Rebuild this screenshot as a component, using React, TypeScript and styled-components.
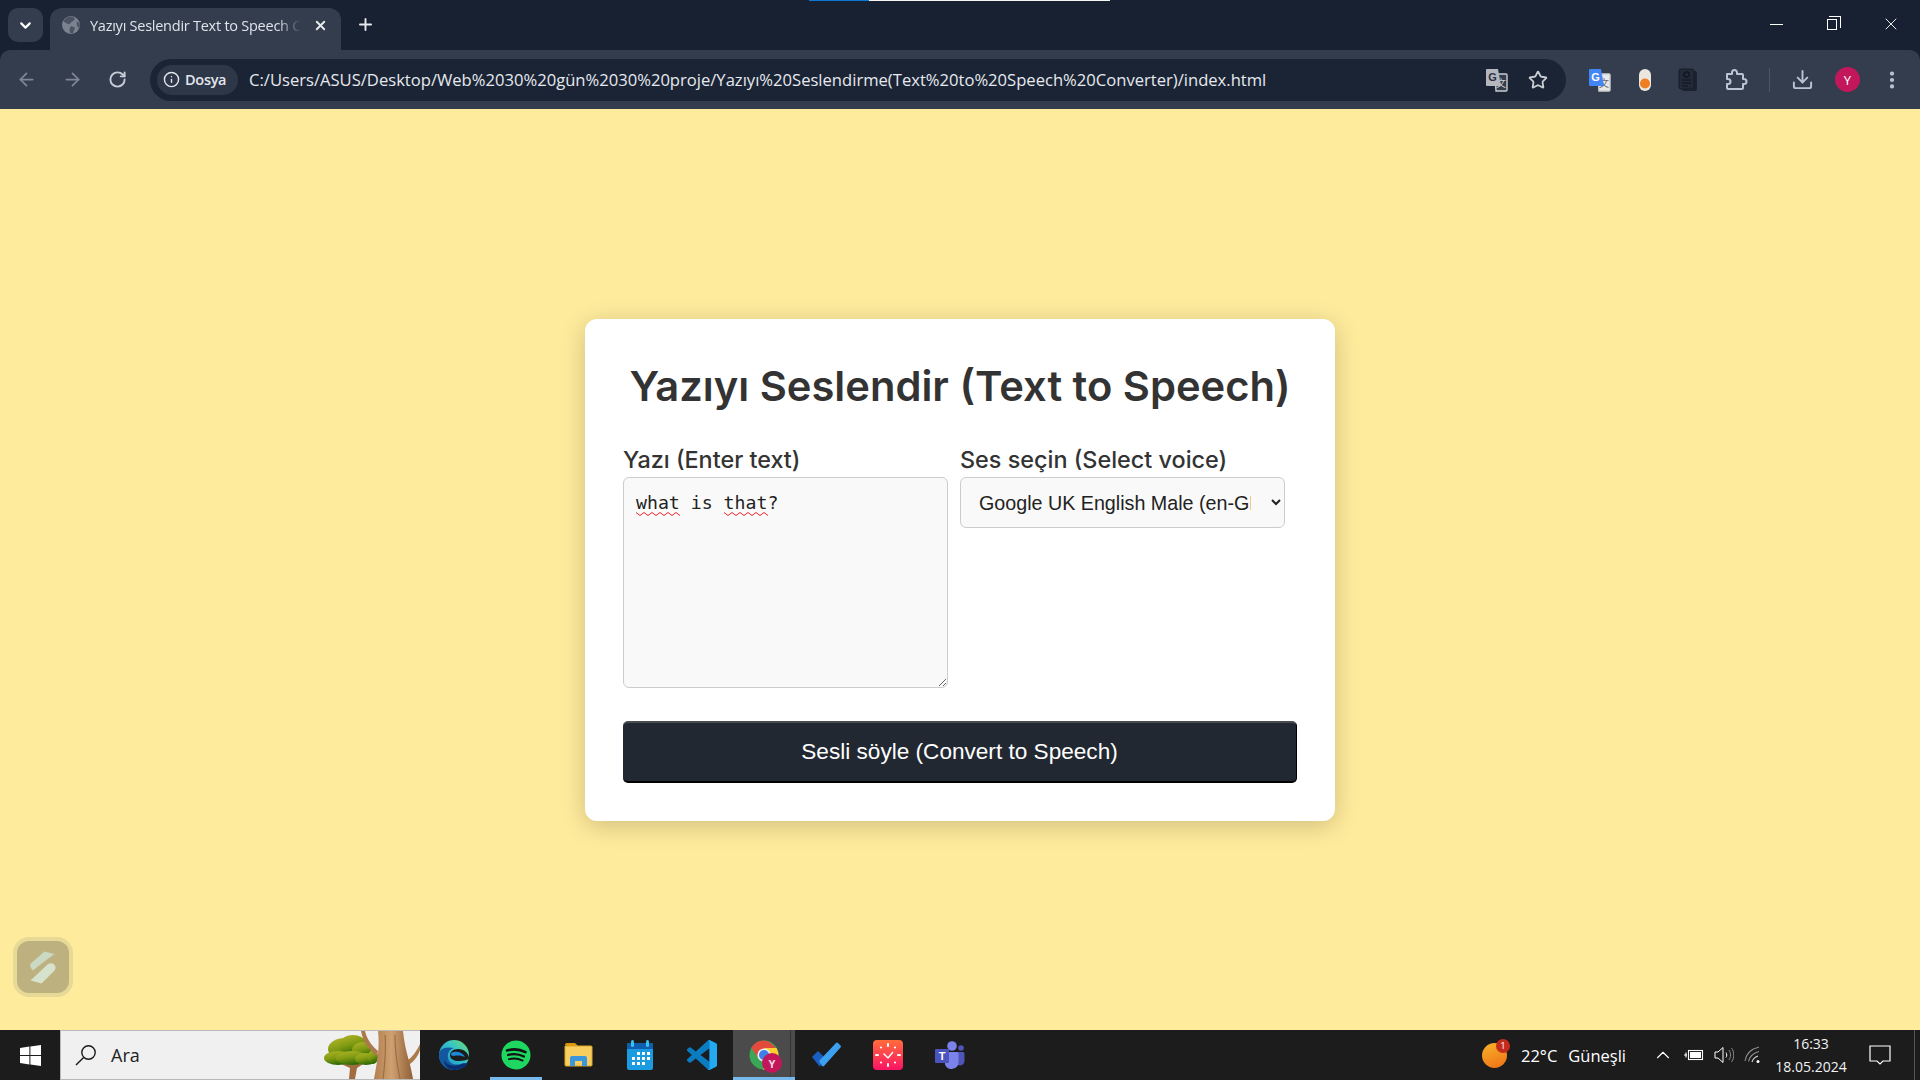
import styled, { createGlobalStyle } from 'styled-components';
import { ArrowLeft, ArrowRight, ChevronDown, ChevronUp, Download, EllipsisVertical, Info, Plus, RotateCw, Star, X } from 'lucide-react';

const GlobalStyle = createGlobalStyle`
    html, body {
        margin: 0;
        height: 100%;
        overflow: hidden;
    }
    * {
        box-sizing: border-box;
    }
`;

const UI_FONT = `'Open Sans', 'Noto Sans', sans-serif`;
const HEADING_FONT = `Inter, 'Noto Sans', sans-serif`;

const GlobeFavicon = () => (
    <svg width="18" height="18" viewBox="0 0 18 18" style={{ flex: 'none' }}>
        <circle cx="9" cy="9" r="9" fill="#7b8290" />
        <path d="M10 0.5c2 1 3 2 2.5 3.5L9.5 6 7 8.5 3 6.5 1.5 5C3.5 2 7 0 10 .5zM9 10l4 1.5L11 17c-1 .5-2 .3-3 0l-.5-4zM14.5 5.5l3 1.5c.5 2 .2 4-.5 5.5l-2-3z" fill="#4c5462" />
    </svg>
);

const TranslateIcon = ({ colored }: { colored?: boolean }) => (
    <svg width="24" height="24" viewBox="0 0 24 24">
        <path d="M10 6h11a1 1 0 0 1 1 1v15a1 1 0 0 1-1 1H11z" fill={colored ? '#e8e8e8' : '#343d4d'} stroke={colored ? '#cfcfcf' : '#c9ccd2'} strokeWidth="1.4" />
        <text x="16" y="19" fontSize="10" textAnchor="middle" fill={colored ? '#666' : '#c9ccd2'} fontFamily="'Noto Sans CJK SC', sans-serif">文</text>
        <path d="M2 1h11l3 17H2a1 1 0 0 1-1-1V2a1 1 0 0 1 1-1z" fill={colored ? '#4285f4' : '#b4b7bc'} />
        <text x="7.5" y="13" fontSize="11" fontWeight="700" textAnchor="middle" fill={colored ? '#fff' : '#2a3140'} fontFamily="'Liberation Sans', sans-serif">G</text>
    </svg>
);

const PillIcon = () => (
    <svg width="14" height="24" viewBox="0 0 14 24">
        <rect x="1" y="1" width="12" height="22" rx="6" fill="#ebe7df" />
        <circle cx="7" cy="15.5" r="5" fill="#ef7d22" />
    </svg>
);

const DarkDocIcon = () => (
    <svg width="20" height="24" viewBox="0 0 20 24">
        <rect x="4" y="3" width="15" height="20" rx="2" fill="#1b2230" />
        <rect x="1" y="1" width="15" height="20" rx="2" fill="#222a38" stroke="#171d29" />
        <circle cx="8.5" cy="6.5" r="2.6" fill="none" stroke="#0e131c" strokeWidth="1.2" />
        <path d="M4 12h9M4 15h9M4 18h6" stroke="#0e131c" strokeWidth="1.2" />
    </svg>
);

// chrome's extensions glyph, lucide's puzzle has a different outline
const ExtensionsIcon = () => (
    <svg width="24" height="24" viewBox="0 0 24 24" fill="none" stroke="#bcc4d4" strokeWidth="2" strokeLinejoin="round">
        <path d="M3 6h5V4.5a2.5 2.5 0 0 1 5 0V6h5a1 1 0 0 1 1 1v4h1a2.5 2.5 0 0 1 0 5h-1v4a1 1 0 0 1-1 1H4a1 1 0 0 1-1-1v-4h1a2.5 2.5 0 0 0 0-5H3z" />
    </svg>
);

const WindowsLogo = () => (
    <svg width="21" height="21" viewBox="0 0 21 21">
        <path d="M0 3 9.4 1.6V10H0zM10.4 1.4 21 0v10H10.4zM0 11h9.4v8.4L0 18zM10.4 11H21v10l-10.6-1.5z" fill="#fff" />
    </svg>
);

const SearchGlass = () => (
    <svg width="22" height="22" viewBox="0 0 22 22" fill="none" stroke="#1a1a1a" strokeWidth="1.4">
        <circle cx="13.5" cy="8.5" r="6.7" />
        <path d="M8.6 13.4 1 21" />
    </svg>
);

// drawn in screen coordinates, taken straight from the screenshot
const TreeArt = () => (
    <svg width="98" height="48" viewBox="322 1032 98 48">
        <defs>
            <linearGradient id="canopy" x1="0" y1="0" x2="0.4" y2="1">
                <stop offset="0" stopColor="#b5b628" />
                <stop offset="0.55" stopColor="#7f9a12" />
                <stop offset="1" stopColor="#2f6a04" />
            </linearGradient>
            <linearGradient id="trunk" x1="0" y1="0" x2="1" y2="0">
                <stop offset="0" stopColor="#b27f50" />
                <stop offset="0.45" stopColor="#cfa071" />
                <stop offset="1" stopColor="#8f5f36" />
            </linearGradient>
        </defs>
        <path d="M349 1080l1-11-13-6 1-2 14 5 4-3-5-3 2-1 6 3 8-4 10-3 1 2-12 6-9 6-2 11z" fill="#a06c40" />
        <g fill="url(#canopy)">
            <ellipse cx="345" cy="1050" rx="17" ry="11" />
            <ellipse cx="353" cy="1046" rx="14" ry="10" />
            <ellipse cx="363" cy="1051" rx="11" ry="8" />
            <ellipse cx="338" cy="1059" rx="14" ry="7" />
            <ellipse cx="352" cy="1059" rx="16" ry="7" />
            <ellipse cx="366" cy="1060" rx="11" ry="6" />
            <ellipse cx="373" cy="1058" rx="5" ry="7" />
        </g>
        <path d="M365 1032c2 8 6 14 13 20l-1 5c-8-6-14-14-16-25zM420 1045c-3 7-8 13-13 17l-1 6c8-5 14-12 15-22z" fill="#ab7a4c" />
        <path d="M378 1032h25c1 10 3 20 6 30 2 7 3 13 4 18h-39c3-16 6-32 4-48z" fill="url(#trunk)" />
        <path d="M385 1036c1 12 0 28-2 44M395 1036c0 14 2 30 5 44" fill="none" stroke="#9c6e43" strokeWidth="1.2" />
    </svg>
);

const EdgeIcon = () => (
    <svg width="32" height="32" viewBox="0 0 32 32">
        <defs>
            <linearGradient id="edgeTop" x1="0" y1="1" x2="1" y2="0">
                <stop offset="0" stopColor="#0f7fd0" />
                <stop offset="0.6" stopColor="#36c3c8" />
                <stop offset="1" stopColor="#6fdc6a" />
            </linearGradient>
        </defs>
        <circle cx="16" cy="16" r="15" fill="url(#edgeTop)" />
        <path d="M1 16c0 9 7 15 15 15 5 0 10-2 13-6l-4-1c-5 3-14 2-15-5-1-5 2-9 6-10-9-2-15 1-15 7z" fill="#13579f" />
        <path d="M31 20c0-6-5-10-11-10-5 0-8 3-8 6 0 4 4 6 9 6 4 0 7-1 10-2z" fill="#1c1c1d" />
        <path d="M17 31c-6 0-11-4-11-10 2 4 8 8 18 4 2-1 5-1 6-1-3 4-8 7-13 7z" fill="#0b2f6e" />
        <path d="M16 13c4-1 9 1 11 5-2-1-7-2-11-1-2 0-3-1-3-2 0-1 1-2 3-2z" fill="#1c8ad8" />
    </svg>
);

const SpotifyIcon = () => (
    <svg width="30" height="30" viewBox="0 0 30 30">
        <circle cx="15" cy="15" r="14.5" fill="#1ed760" />
        <g fill="none" stroke="#121212" strokeLinecap="round">
            <path d="M6 10.5c6-1.8 13-1.2 18.5 1.6" strokeWidth="2.6" />
            <path d="M7 15c5-1.5 11-1 16 1.6" strokeWidth="2.2" />
            <path d="M8 19.2c4.6-1.1 9.4-.7 13.6 1.4" strokeWidth="1.9" />
        </g>
    </svg>
);

const FolderIcon = () => (
    <svg width="29" height="26" viewBox="0 0 29 26">
        <path d="M1 3a2 2 0 0 1 2-2h8l3 3H3z" fill="#d99a05" />
        <path d="M1 4h26a1 1 0 0 1 1 1v18a1 1 0 0 1-1 1H2a1 1 0 0 1-1-1z" fill="#f8cf5e" stroke="#dba52b" />
        <path d="M6 24v-8a2 2 0 0 1 2-2h13a2 2 0 0 1 2 2v8h-5v-5h-7v5z" fill="#3b96dc" />
    </svg>
);

const CalendarIcon = () => (
    <svg width="26" height="30" viewBox="0 0 26 30">
        <rect x="0" y="3" width="26" height="27" rx="2" fill="#1b9be0" />
        <path d="M0 5a2 2 0 0 1 2-2h22a2 2 0 0 1 2 2v4H0z" fill="#0f5fb0" />
        <rect x="4" y="0" width="3" height="7" rx="1.5" fill="#3cc0ef" />
        <rect x="19" y="0" width="3" height="7" rx="1.5" fill="#3cc0ef" />
        <g fill="#fff">
            <rect x="10" y="12" width="3" height="3" /><rect x="15" y="12" width="3" height="3" /><rect x="20" y="12" width="3" height="3" />
            <rect x="5" y="17" width="3" height="3" /><rect x="10" y="17" width="3" height="3" /><rect x="15" y="17" width="3" height="3" /><rect x="20" y="17" width="3" height="3" />
            <rect x="5" y="22" width="3" height="3" /><rect x="10" y="22" width="3" height="3" /><rect x="15" y="22" width="3" height="3" />
        </g>
    </svg>
);

const VsCodeIcon = () => (
    <svg width="30" height="30" viewBox="0 0 32 32">
        <path d="M30.9 3.5 24.3.3a2 2 0 0 0-2.3.4L9.4 12.2 3.9 8a1.3 1.3 0 0 0-1.7.1L.4 9.7a1.3 1.3 0 0 0 0 2L5.2 16 .4 20.3a1.3 1.3 0 0 0 0 2l1.8 1.6a1.3 1.3 0 0 0 1.7.1l5.5-4.2L22 31.3a2 2 0 0 0 2.3.4l6.6-3.2a2 2 0 0 0 1.1-1.8V5.3a2 2 0 0 0-1.1-1.8zM24 23.3 14.4 16 24 8.7z" fill="#0a7cc2" />
        <path d="M22 31.3a2 2 0 0 0 2.3.4l6.6-3.2a2 2 0 0 0 1.1-1.8V5.3a2 2 0 0 0-1.1-1.8L24.3.3a2 2 0 0 0-2.3.4c1-.6 2 .2 2 1.3v27.9c0 1.2-1 1.9-2 1.4z" fill="#23a8f2" />
    </svg>
);

const ChromeIcon = () => (
    <svg width="30" height="30" viewBox="0 0 30 30">
        <circle cx="15" cy="15" r="14.5" fill="#3aa757" />
        <path d="M15 .5A14.5 14.5 0 0 0 2.4 7.8L9 18l2-7h16.5A14.5 14.5 0 0 0 15 .5z" fill="#e24b3c" />
        <path d="M27.5 8H15l5 8-6 13.5A14.5 14.5 0 0 0 27.5 8z" fill="#fdd02f" />
        <circle cx="15" cy="15" r="6.6" fill="#e8eef8" />
        <circle cx="15" cy="15" r="5" fill="#3f7fe8" />
    </svg>
);

const ChromeAppIcon = () => (
    <ChromeWrap>
        <ChromeIcon />
        <ChromeBadge>Y</ChromeBadge>
    </ChromeWrap>
);

const TodoIcon = () => (
    <svg width="30" height="26" viewBox="0 0 30 26">
        <path d="M1 15 7 9l6 6-4 10z" fill="#1a5ec1" />
        <path d="M8 19 25 1a1.5 1.5 0 0 1 2 0l2.5 2.5a1.5 1.5 0 0 1 0 2L13 24a1.5 1.5 0 0 1-2 0z" fill="#3d9ff0" />
    </svg>
);

const ClockAppIcon = () => (
    <svg width="30" height="30" viewBox="0 0 30 30">
        <defs>
            <linearGradient id="clockBg" x1="0" y1="0" x2="0" y2="1">
                <stop offset="0" stopColor="#ff6d3b" />
                <stop offset="1" stopColor="#fb1363" />
            </linearGradient>
        </defs>
        <rect width="30" height="30" rx="4" fill="url(#clockBg)" />
        <g fill="#fff">
            <rect x="14" y="3" width="2" height="4" rx="1" /><rect x="14" y="23" width="2" height="4" rx="1" />
            <rect x="2" y="14" width="4" height="2" rx="1" /><rect x="24" y="14" width="4" height="2" rx="1" />
            <circle cx="8" cy="7.5" r="1.1" /><circle cx="22" cy="7.5" r="1.1" /><circle cx="8" cy="22.5" r="1.1" /><circle cx="22" cy="22.5" r="1.1" />
        </g>
        <path d="M10.5 13.5 15 18l5-6" fill="none" stroke="#fff" strokeWidth="1.5" />
    </svg>
);

const TeamsIcon = () => (
    <svg width="30" height="30" viewBox="0 0 30 30">
        <circle cx="17" cy="6" r="4.8" fill="#7b83eb" />
        <circle cx="26" cy="8" r="2.8" fill="#4f56b8" />
        <path d="M21 12h7a1.5 1.5 0 0 1 1.5 1.5V21a4.5 4.5 0 0 1-8.5 2z" fill="#4f56b8" />
        <path d="M10 12h12a1.5 1.5 0 0 1 1.5 1.5V22a7 7 0 0 1-13.5 2.5z" fill="#7b83eb" />
        <rect x="0" y="9" width="14" height="14" rx="1" fill="#4b53bc" />
        <text x="7" y="20" fontSize="11" fontWeight="700" textAnchor="middle" fill="#fff" fontFamily="'Liberation Sans', sans-serif">T</text>
    </svg>
);

const WifiIcon = () => (
    <svg width="18" height="18" viewBox="0 0 18 18" fill="none" stroke="#8d8d8d" strokeWidth="1.1">
        <path d="M1 15C2 8 7 3 15 1" />
        <path d="M4.5 15.5C5.5 11 9 7 15 5.5" />
        <path d="M8 16c.8-3 3-5 6-6" stroke="#d0d0d0" />
        <circle cx="14" cy="15.5" r="1.5" fill="#fff" stroke="none" />
    </svg>
);

const BatteryIcon = () => (
    <svg width="20" height="14" viewBox="0 0 20 14" fill="none" stroke="#fff" strokeWidth="1.1">
        <rect x="4.5" y="2.5" width="14" height="9" />
        <rect x="6" y="4" width="11" height="6" fill="#fff" stroke="none" />
        <path d="M0 7h3M2 4.5v5" />
    </svg>
);

const SpeakerIcon = () => (
    <svg width="20" height="18" viewBox="0 0 20 18" fill="none" stroke="#fff" strokeWidth="1">
        <path d="M1 6h3l5-4.5v15L4 12H1z" />
        <path d="M12 6.5c1 1.4 1 3.6 0 5" />
        <path d="M15 4c2 3 2 7 0 10M17.5 2c3 4 3 10 0 14" stroke="#8d8d8d" />
    </svg>
);

const NotificationIcon = () => (
    <svg width="22" height="20" viewBox="0 0 22 20" fill="none" stroke="#fff" strokeWidth="1.2">
        <path d="M1 1h20v15h-7l-3 3-3-3H1z" />
    </svg>
);

const Squiggle = ({ width }: { width: number }) => (
    <svg width={width} height="4" viewBox={`0 0 ${width} 4`}>
        <path d={Array.from({ length: Math.ceil(width / 4) + 1 }, (_, i) => `${i === 0 ? 'M' : 'L'}${i * 4} ${i % 2 ? 3.5 : 0.5}`).join(' ')} fill="none" stroke="#f0272d" strokeWidth="1" />
    </svg>
);

const TASKBAR_APPS = [
    { key: 'edge', icon: <EdgeIcon /> },
    { key: 'spotify', icon: <SpotifyIcon />, running: true },
    { key: 'files', icon: <FolderIcon /> },
    { key: 'calendar', icon: <CalendarIcon /> },
    { key: 'vscode', icon: <VsCodeIcon /> },
    { key: 'chrome', icon: <ChromeAppIcon />, active: true },
    { key: 'todo', icon: <TodoIcon /> },
    { key: 'clock', icon: <ClockAppIcon /> },
    { key: 'teams', icon: <TeamsIcon /> },
];

const App = () => {
    return (
        <Screen>
            <GlobalStyle />
            <TabStrip>
                <CaptureBar>
                    <CaptureBlue />
                    <CaptureWhite />
                </CaptureBar>
                <TabListButton>
                    <ChevronDown size={17} strokeWidth={3} color="#fff" />
                </TabListButton>
                <Tab>
                    <GlobeFavicon />
                    <TabTitle>Yazıyı Seslendir Text to Speech Converter</TabTitle>
                    <X size={15} strokeWidth={3} color="#e8eaed" />
                </Tab>
                <NewTab>
                    <Plus size={19} strokeWidth={2.4} color="#e8eaed" />
                </NewTab>
                <WindowControls>
                    <MinimizeLine />
                    <RestoreIcon />
                    <X size={20} strokeWidth={1.1} color="#fff" />
                </WindowControls>
            </TabStrip>
            <Toolbar>
                <NavButtons>
                    <ArrowLeft size={21} color="#7f8794" />
                    <ArrowRight size={21} color="#7f8794" />
                    <RotateCw size={19} strokeWidth={2.4} color="#c7cdd8" />
                </NavButtons>
                <Omnibox>
                    <SiteChip>
                        <Info size={17} strokeWidth={2} color="#e3e6ec" />
                        Dosya
                    </SiteChip>
                    <Url>C:/Users/ASUS/Desktop/Web%2030%20gün%2030%20proje/Yazıyı%20Seslendirme(Text%20to%20Speech%20Converter)/index.html</Url>
                    <OmniboxActions>
                        <TranslateIcon />
                        <Star size={20} strokeWidth={2.2} color="#c9cdd3" />
                    </OmniboxActions>
                </Omnibox>
                <Extensions>
                    <TranslateIcon colored />
                    <PillIcon />
                    <DarkDocIcon />
                    <ExtensionsIcon />
                </Extensions>
                <ToolbarDivider />
                <ToolbarEnd>
                    <Download size={23} strokeWidth={2} color="#bcc4d4" />
                    <Avatar>Y</Avatar>
                    <EllipsisVertical size={22} strokeWidth={2.6} color="#bcc4d4" />
                </ToolbarEnd>
            </Toolbar>
            <Page>
                <Card>
                    <Title>Yazıyı Seslendir (Text to Speech)</Title>
                    <FormRow>
                        <Field>
                            <Label htmlFor="text">Yazı (Enter text)</Label>
                            <TextAreaWrap>
                                <TextInput id="text" defaultValue="what is that?" spellCheck={false} />
                                <SpellMark $left={13}>
                                    <Squiggle width={44} />
                                </SpellMark>
                                <SpellMark $left={101}>
                                    <Squiggle width={44} />
                                </SpellMark>
                            </TextAreaWrap>
                        </Field>
                        <Field>
                            <Label htmlFor="voice">Ses seçin (Select voice)</Label>
                            <VoiceSelect id="voice" defaultValue="uk-male">
                                <option value="uk-male">Google UK English Male (en-GB)</option>
                            </VoiceSelect>
                        </Field>
                    </FormRow>
                    <ConvertButton>Sesli söyle (Convert to Speech)</ConvertButton>
                </Card>
                <FloatingWidget>
                    <WidgetInner>
                        <svg width="26" height="33" viewBox="0 0 26 33">
                            <path d="M14.5.5 24.5 3 11 13 3 19.5C0 16-.5 14 .8 12.5z" fill="#cbd9c2" />
                            <path d="M.5 29.5 17.5 13.5c3-2.5 8-1 8 3 0 1.5-.5 2.5-1.5 3.5L11.5 32.5z" fill="#d7e2cd" />
                        </svg>
                    </WidgetInner>
                </FloatingWidget>
            </Page>
            <Taskbar>
                <StartButton>
                    <WindowsLogo />
                </StartButton>
                <SearchBox>
                    <SearchGlass />
                    <SearchLabel>Ara</SearchLabel>
                    <TreeSlot>
                        <TreeArt />
                    </TreeSlot>
                </SearchBox>
                <AppList>
                    {TASKBAR_APPS.map((app) => (
                        <AppCell key={app.key} $active={app.active} $running={app.running}>
                            {app.icon}
                        </AppCell>
                    ))}
                </AppList>
                <Tray>
                    <WeatherIcon>
                        <WeatherBadge>1</WeatherBadge>
                    </WeatherIcon>
                    <WeatherText>22°C</WeatherText>
                    <WeatherText>Güneşli</WeatherText>
                    <TrayIcons>
                        <ChevronUp size={22} strokeWidth={1.2} color="#fff" />
                        <BatteryIcon />
                        <SpeakerIcon />
                        <WifiIcon />
                    </TrayIcons>
                    <Clock>
                        <span>16:33</span>
                        <span>18.05.2024</span>
                    </Clock>
                    <NotificationIcon />
                    <ShowDesktop />
                </Tray>
            </Taskbar>
        </Screen>
    );
};

export default App;

const Screen = styled.div`
    height: 100vh;
    display: flex;
    flex-direction: column;
    background: #172131;
    font-family: ${UI_FONT};
`;

const TabStrip = styled.div`
    position: relative;
    flex: 0 0 50px;
    display: flex;
    align-items: flex-end;
    padding-left: 8px;
`;

const CaptureBar = styled.div`
    position: absolute;
    top: 0;
    left: 809px;
    display: flex;
    height: 1px;
`;

const CaptureBlue = styled.div`
    width: 60px;
    background: #0a78d7;
`;

const CaptureWhite = styled.div`
    width: 241px;
    background: #f4f4f4;
`;

const TabListButton = styled.div`
    width: 35px;
    height: 34px;
    margin-bottom: 8px;
    display: flex;
    align-items: center;
    justify-content: center;
    border-radius: 10px;
    background: #343d4d;
`;

const Tab = styled.div`
    width: 291px;
    height: 42px;
    margin-left: 7px;
    padding: 0 13px 8px 12px;
    display: flex;
    align-items: center;
    gap: 10px;
    border-radius: 12px 12px 0 0;
    background: #343d4d;
`;

const TabTitle = styled.div`
    flex: 1;
    overflow: hidden;
    white-space: nowrap;
    font-size: 14.5px;
    letter-spacing: -0.25px;
    color: #dfe3ea;
    -webkit-mask-image: linear-gradient(to right, #000 88%, transparent 99%);
    mask-image: linear-gradient(to right, #000 88%, transparent 99%);
`;

const NewTab = styled.div`
    width: 36px;
    height: 42px;
    margin-left: 6px;
    padding-bottom: 9px;
    display: flex;
    align-items: center;
    justify-content: center;
`;

const WindowControls = styled.div`
    margin-left: auto;
    width: 150px;
    height: 50px;
    padding: 0 19px 2px 0;
    display: flex;
    align-items: center;
    justify-content: space-between;
`;

const MinimizeLine = styled.div`
    width: 13px;
    height: 1px;
    background: #fff;
`;

const RestoreIcon = styled.div`
    position: relative;
    width: 10px;
    height: 11px;
    border: 1px solid #fff;

    &::before {
        content: '';
        position: absolute;
        top: -4px;
        left: 1px;
        width: 11px;
        height: 11px;
        border-top: 1px solid #fff;
        border-right: 1px solid #fff;
    }
`;

const Toolbar = styled.div`
    flex: 0 0 59px;
    display: flex;
    align-items: center;
    padding: 0 14px 0 16px;
    border-radius: 10px 10px 0 0;
    background: #343d4d;
`;

const NavButtons = styled.div`
    width: 134px;
    padding-right: 23px;
    display: flex;
    align-items: center;
    justify-content: space-between;
`;

const Omnibox = styled.div`
    width: 1416px;
    height: 42px;
    padding: 0 18px 0 7px;
    display: flex;
    align-items: center;
    border-radius: 21px;
    background: #1b2434;
`;

const SiteChip = styled.div`
    width: 81px;
    height: 30px;
    padding-left: 6px;
    display: flex;
    align-items: center;
    gap: 5px;
    border-radius: 15px;
    background: #2e3747;
    color: #e3e6ec;
    font-size: 14.5px;
    font-weight: 600;
    letter-spacing: -0.3px;
`;

const Url = styled.div`
    margin-left: 11px;
    white-space: nowrap;
    font-size: 16.6px;
    color: #e6e9ef;
`;

const OmniboxActions = styled.div`
    margin-left: auto;
    width: 63px;
    display: flex;
    align-items: center;
    justify-content: space-between;
`;

const Extensions = styled.div`
    width: 160px;
    margin-left: 22px;
    display: flex;
    align-items: center;
    justify-content: space-between;
`;

const ToolbarDivider = styled.div`
    width: 1px;
    height: 24px;
    margin-left: 21px;
    background: #4c5566;
`;

const ToolbarEnd = styled.div`
    width: 112px;
    margin-left: 21px;
    display: flex;
    align-items: center;
    justify-content: space-between;
`;

const Avatar = styled.div`
    width: 25px;
    height: 25px;
    display: flex;
    align-items: center;
    justify-content: center;
    border-radius: 50%;
    background: #c2185b;
    color: #fff;
    font-size: 13px;
`;

const Page = styled.main`
    position: relative;
    flex: 1;
    padding-top: 1px;
    display: flex;
    align-items: center;
    justify-content: center;
    background: #ffeb9c;
`;

const Card = styled.div`
    width: 750px;
    height: 502px;
    padding: 38px;
    display: flex;
    flex-direction: column;
    border-radius: 12px;
    background: #fff;
    box-shadow: 0 5px 25px rgba(0, 0, 0, 0.19);
`;

const Title = styled.h1`
    margin: 0 0 32px;
    height: 58px;
    line-height: 58px;
    text-align: center;
    font-family: ${HEADING_FONT};
    font-size: 41.7px;
    font-weight: 600;
    color: #333;
    white-space: nowrap;
`;

const FormRow = styled.div`
    display: flex;
    gap: 12px;
`;

const Field = styled.div`
    width: 325px;
    display: flex;
    flex-direction: column;
`;

const Label = styled.label`
    height: 30px;
    line-height: 26px;
    font-family: ${HEADING_FONT};
    font-size: 23.4px;
    font-weight: 500;
    color: #333;
    white-space: nowrap;
`;

const TextAreaWrap = styled.div`
    position: relative;
    height: 211px;
`;

const TextInput = styled.textarea`
    display: block;
    width: 100%;
    height: 100%;
    padding: 14px 12px;
    border: 1px solid #ccc;
    border-radius: 6px;
    outline: none;
    background: #f9f9f9;
    color: #222;
    font-family: 'DejaVu Sans Mono', monospace;
    font-size: 18.2px;
    line-height: 22px;
`;

const SpellMark = styled.span<{ $left: number }>`
    position: absolute;
    top: 33px;
    left: ${(props) => props.$left}px;
    line-height: 0;
`;

const VoiceSelect = styled.select`
    width: 100%;
    height: 51px;
    padding: 0 17px 0 14px;
    border: 1px solid #ccc;
    border-radius: 6px;
    background: #f9f9f9;
    color: #222;
    font-family: 'Liberation Sans', sans-serif;
    font-size: 19.7px;
`;

const ConvertButton = styled.button`
    width: 100%;
    height: 62px;
    margin-top: 33px;
    border: none;
    border-top: 2px solid #4a4c4f;
    border-right: 1px solid #000;
    border-bottom: 2px solid #000;
    border-radius: 5px;
    background: #222831;
    color: #fff;
    font-family: 'Liberation Sans', sans-serif;
    font-size: 22.6px;
`;

const FloatingWidget = styled.div`
    position: absolute;
    left: 13px;
    bottom: 33px;
    width: 60px;
    height: 60px;
    padding: 4px;
    border-radius: 16px;
    background: #e7d996;
`;

const WidgetInner = styled.div`
    width: 100%;
    height: 100%;
    display: flex;
    align-items: center;
    justify-content: center;
    border-radius: 12px;
    background: #bdb17f;
`;

const Taskbar = styled.footer`
    flex: 0 0 50px;
    display: flex;
    align-items: stretch;
    background: #1c1c1d;
`;

const StartButton = styled.div`
    width: 60px;
    display: flex;
    align-items: center;
    justify-content: center;
`;

const SearchBox = styled.div`
    width: 360px;
    padding-left: 14px;
    display: flex;
    align-items: center;
    border: 1px solid #b8b8b8;
    border-right: none;
    background: #f0f0f0;
    overflow: hidden;
`;

const SearchLabel = styled.span`
    margin-left: 14px;
    font-size: 18px;
    color: #222;
`;

const TreeSlot = styled.div`
    margin-left: auto;
    height: 48px;
`;

const AppList = styled.div`
    margin-left: 3px;
    display: flex;
`;

const AppCell = styled.div<{ $active?: boolean; $running?: boolean }>`
    position: relative;
    width: 62px;
    display: flex;
    align-items: center;
    justify-content: center;
    background: ${(props) => (props.$active ? '#4b4b4b' : 'transparent')};

    &::before {
        content: '';
        display: ${(props) => (props.$active ? 'block' : 'none')};
        position: absolute;
        top: 0;
        right: 4px;
        bottom: 0;
        width: 1px;
        background: #333;
    }

    &::after {
        content: '';
        display: ${(props) => (props.$active || props.$running ? 'block' : 'none')};
        position: absolute;
        left: ${(props) => (props.$running ? '5px' : '0')};
        right: ${(props) => (props.$running ? '5px' : '0')};
        bottom: 0;
        height: 3px;
        background: #76b9ed;
    }
`;

const ChromeWrap = styled.div`
    position: relative;
    width: 30px;
    height: 30px;
`;

const ChromeBadge = styled.div`
    position: absolute;
    right: -3px;
    bottom: -3px;
    width: 20px;
    height: 20px;
    display: flex;
    align-items: center;
    justify-content: center;
    border-radius: 50%;
    background: #c2185b;
    color: #f4d5e2;
    font-size: 11px;
    font-weight: 700;
`;

const Tray = styled.div`
    margin-left: auto;
    display: flex;
    align-items: center;
    color: #fff;
`;

const WeatherIcon = styled.div`
    position: relative;
    width: 25px;
    height: 25px;
    margin-right: 14px;
    border-radius: 50%;
    background: linear-gradient(160deg, #f7b32b, #ee6f15);
`;

const WeatherBadge = styled.div`
    position: absolute;
    top: -4px;
    right: -3px;
    width: 14px;
    height: 14px;
    display: flex;
    align-items: center;
    justify-content: center;
    border-radius: 50%;
    background: #c42b1c;
    color: #fff;
    font-size: 9.5px;
`;

const WeatherText = styled.span`
    margin-right: 11px;
    font-size: 16.5px;
    color: #fff;
`;

const TrayIcons = styled.div`
    width: 110px;
    margin-left: 15px;
    display: flex;
    align-items: center;
    justify-content: space-between;
`;

const Clock = styled.div`
    width: 84px;
    margin: 0 16px 0 7px;
    display: flex;
    flex-direction: column;
    align-items: center;
    font-size: 14px;
    line-height: 23px;
    color: #f2f2f2;
`;

const ShowDesktop = styled.div`
    width: 1px;
    height: 100%;
    margin: 0 5px 0 23px;
    background: #555;
`;
